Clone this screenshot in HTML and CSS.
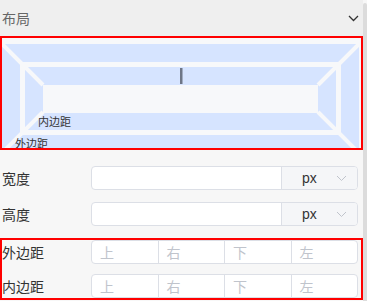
FILE: index.html
```html
<!DOCTYPE html>
<html lang="zh-CN">
<head>
  <meta charset="UTF-8">
  <title>布局</title>
  <link rel="stylesheet" href="styles.css">
</head>
<body>
  <div class="panel">
    <div class="main">
      <div class="section-head">
        <span>布局</span>
        <svg class="head-arrow" width="11" height="7" viewBox="0 0 11 7">
          <path d="M1 1 L5.5 5.5 L10 1" fill="none" stroke="#333" stroke-width="1.3"/>
        </svg>
      </div>

      <!-- box model diagram -->
      <div class="box-model">
        <svg width="359" height="110" viewBox="0 0 359 110">
          <rect x="0" y="0" width="359" height="110" fill="#f7f8fa"/>
          <rect x="0" y="6" width="357" height="109" fill="#d6e4ff"/>
          <rect x="18" y="24" width="321" height="73" fill="#f7f8fa"/>
          <rect x="23" y="29" width="311" height="63" fill="#d6e4ff"/>
          <rect x="41" y="47" width="275" height="28" fill="#f7f8fa"/>
          <g stroke="#f7f8fa" stroke-width="4">
            <line x1="0" y1="6" x2="41" y2="47"/>
            <line x1="357" y1="6" x2="316" y2="47"/>
            <line x1="0" y1="115" x2="41" y2="74"/>
            <line x1="357" y1="115" x2="316" y2="74"/>
          </g>
          <rect x="178" y="30" width="2.5" height="16" fill="#6e7687"/>
          <text x="36" y="88" class="bm-label">内边距</text>
          <text x="13" y="110" class="bm-label">外边距</text>
        </svg>
      </div>

      <div class="field-row">
        <label class="field-label">宽度</label>
        <div class="input-unit">
          <div class="input-text"></div>
          <div class="unit">
            <span>px</span>
            <svg width="11" height="7" viewBox="0 0 11 7">
              <path d="M1 1 L5.5 5.5 L10 1" fill="none" stroke="#c0c4cc" stroke-width="1"/>
            </svg>
          </div>
        </div>
      </div>
      <div class="field-row">
        <label class="field-label">高度</label>
        <div class="input-unit">
          <div class="input-text"></div>
          <div class="unit">
            <span>px</span>
            <svg width="11" height="7" viewBox="0 0 11 7">
              <path d="M1 1 L5.5 5.5 L10 1" fill="none" stroke="#c0c4cc" stroke-width="1"/>
            </svg>
          </div>
        </div>
      </div>

      <div class="spacing-box">
        <div class="field-row">
          <label class="field-label">外边距</label>
          <div class="quad">
            <span>上</span><span>右</span><span>下</span><span>左</span>
          </div>
        </div>
        <div class="field-row">
          <label class="field-label">内边距</label>
          <div class="quad">
            <span>上</span><span>右</span><span>下</span><span>左</span>
          </div>
        </div>
      </div>
    </div>
    <div class="scrollbar"></div>
  </div>
</body>
</html>
```

FILE: styles.css
```css
body {
  margin: 0;
  background-color: #f7f7f7;
  font-family: "Liberation Sans", "Noto Sans CJK SC", sans-serif;
  overflow: hidden;
}

.panel {
  display: flex;
  width: 367px;
  height: 301px;
}

.main {
  width: 363px;
}

.scrollbar {
  width: 4px;
  margin-top: 3px;
  background-color: #dcdcdc;
  border-radius: 2px 2px 0 0;
}

.section-head {
  height: 36px;
  display: flex;
  align-items: center;
  justify-content: space-between;
  padding: 0 4px 0 2px;
  background-color: #efefef;
  color: #666;
  font-size: 14px;
  box-sizing: border-box;
}

.head-arrow {
  margin-top: 1px;
}

/* box model */
.box-model {
  border: 2px solid #f00;
  height: 110px;
  overflow: hidden;
}

.box-model svg {
  display: block;
}

.bm-label {
  font-family: "Noto Sans CJK SC", sans-serif;
  font-size: 11px;
  fill: #333;
}

/* rows */
.field-row {
  display: flex;
  align-items: center;
  height: 24px;
  padding-left: 2px;
  margin-top: 12px;
}

.box-model + .field-row {
  margin-top: 16px;
}

.field-label {
  width: 89px;
  font-size: 14px;
  color: #333;
}

.input-unit {
  width: 267px;
  height: 24px;
  display: flex;
  border: 1px solid #dcdfe6;
  border-radius: 4px;
  box-sizing: border-box;
  background-color: #fff;
  overflow: hidden;
}

.input-text {
  flex: 1;
}

.unit {
  width: 76px;
  display: flex;
  align-items: center;
  padding-left: 20px;
  gap: 19px;
  background-color: #f5f6f8;
  border-left: 1px solid #dcdfe6;
  box-sizing: border-box;
  font-size: 14px;
  color: #333;
}

/* margin / padding */
.spacing-box {
  border: 2px solid #f00;
  margin-top: 12px;
  display: flex;
  flex-direction: column;
  gap: 10px;
}

.spacing-box .field-row {
  margin-top: 0;
  padding-left: 0;
}

.quad {
  width: 267px;
  height: 24px;
  display: flex;
  border: 1px solid #dcdfe6;
  border-radius: 4px;
  box-sizing: border-box;
  background-color: #fff;
}

.quad span {
  flex: 1;
  padding-left: 8px;
  line-height: 22px;
  font-size: 14px;
  color: #c0c4cc;
  font-family: "Noto Sans CJK SC", sans-serif;
}

.quad span + span {
  border-left: 1px solid #dcdfe6;
}
```
